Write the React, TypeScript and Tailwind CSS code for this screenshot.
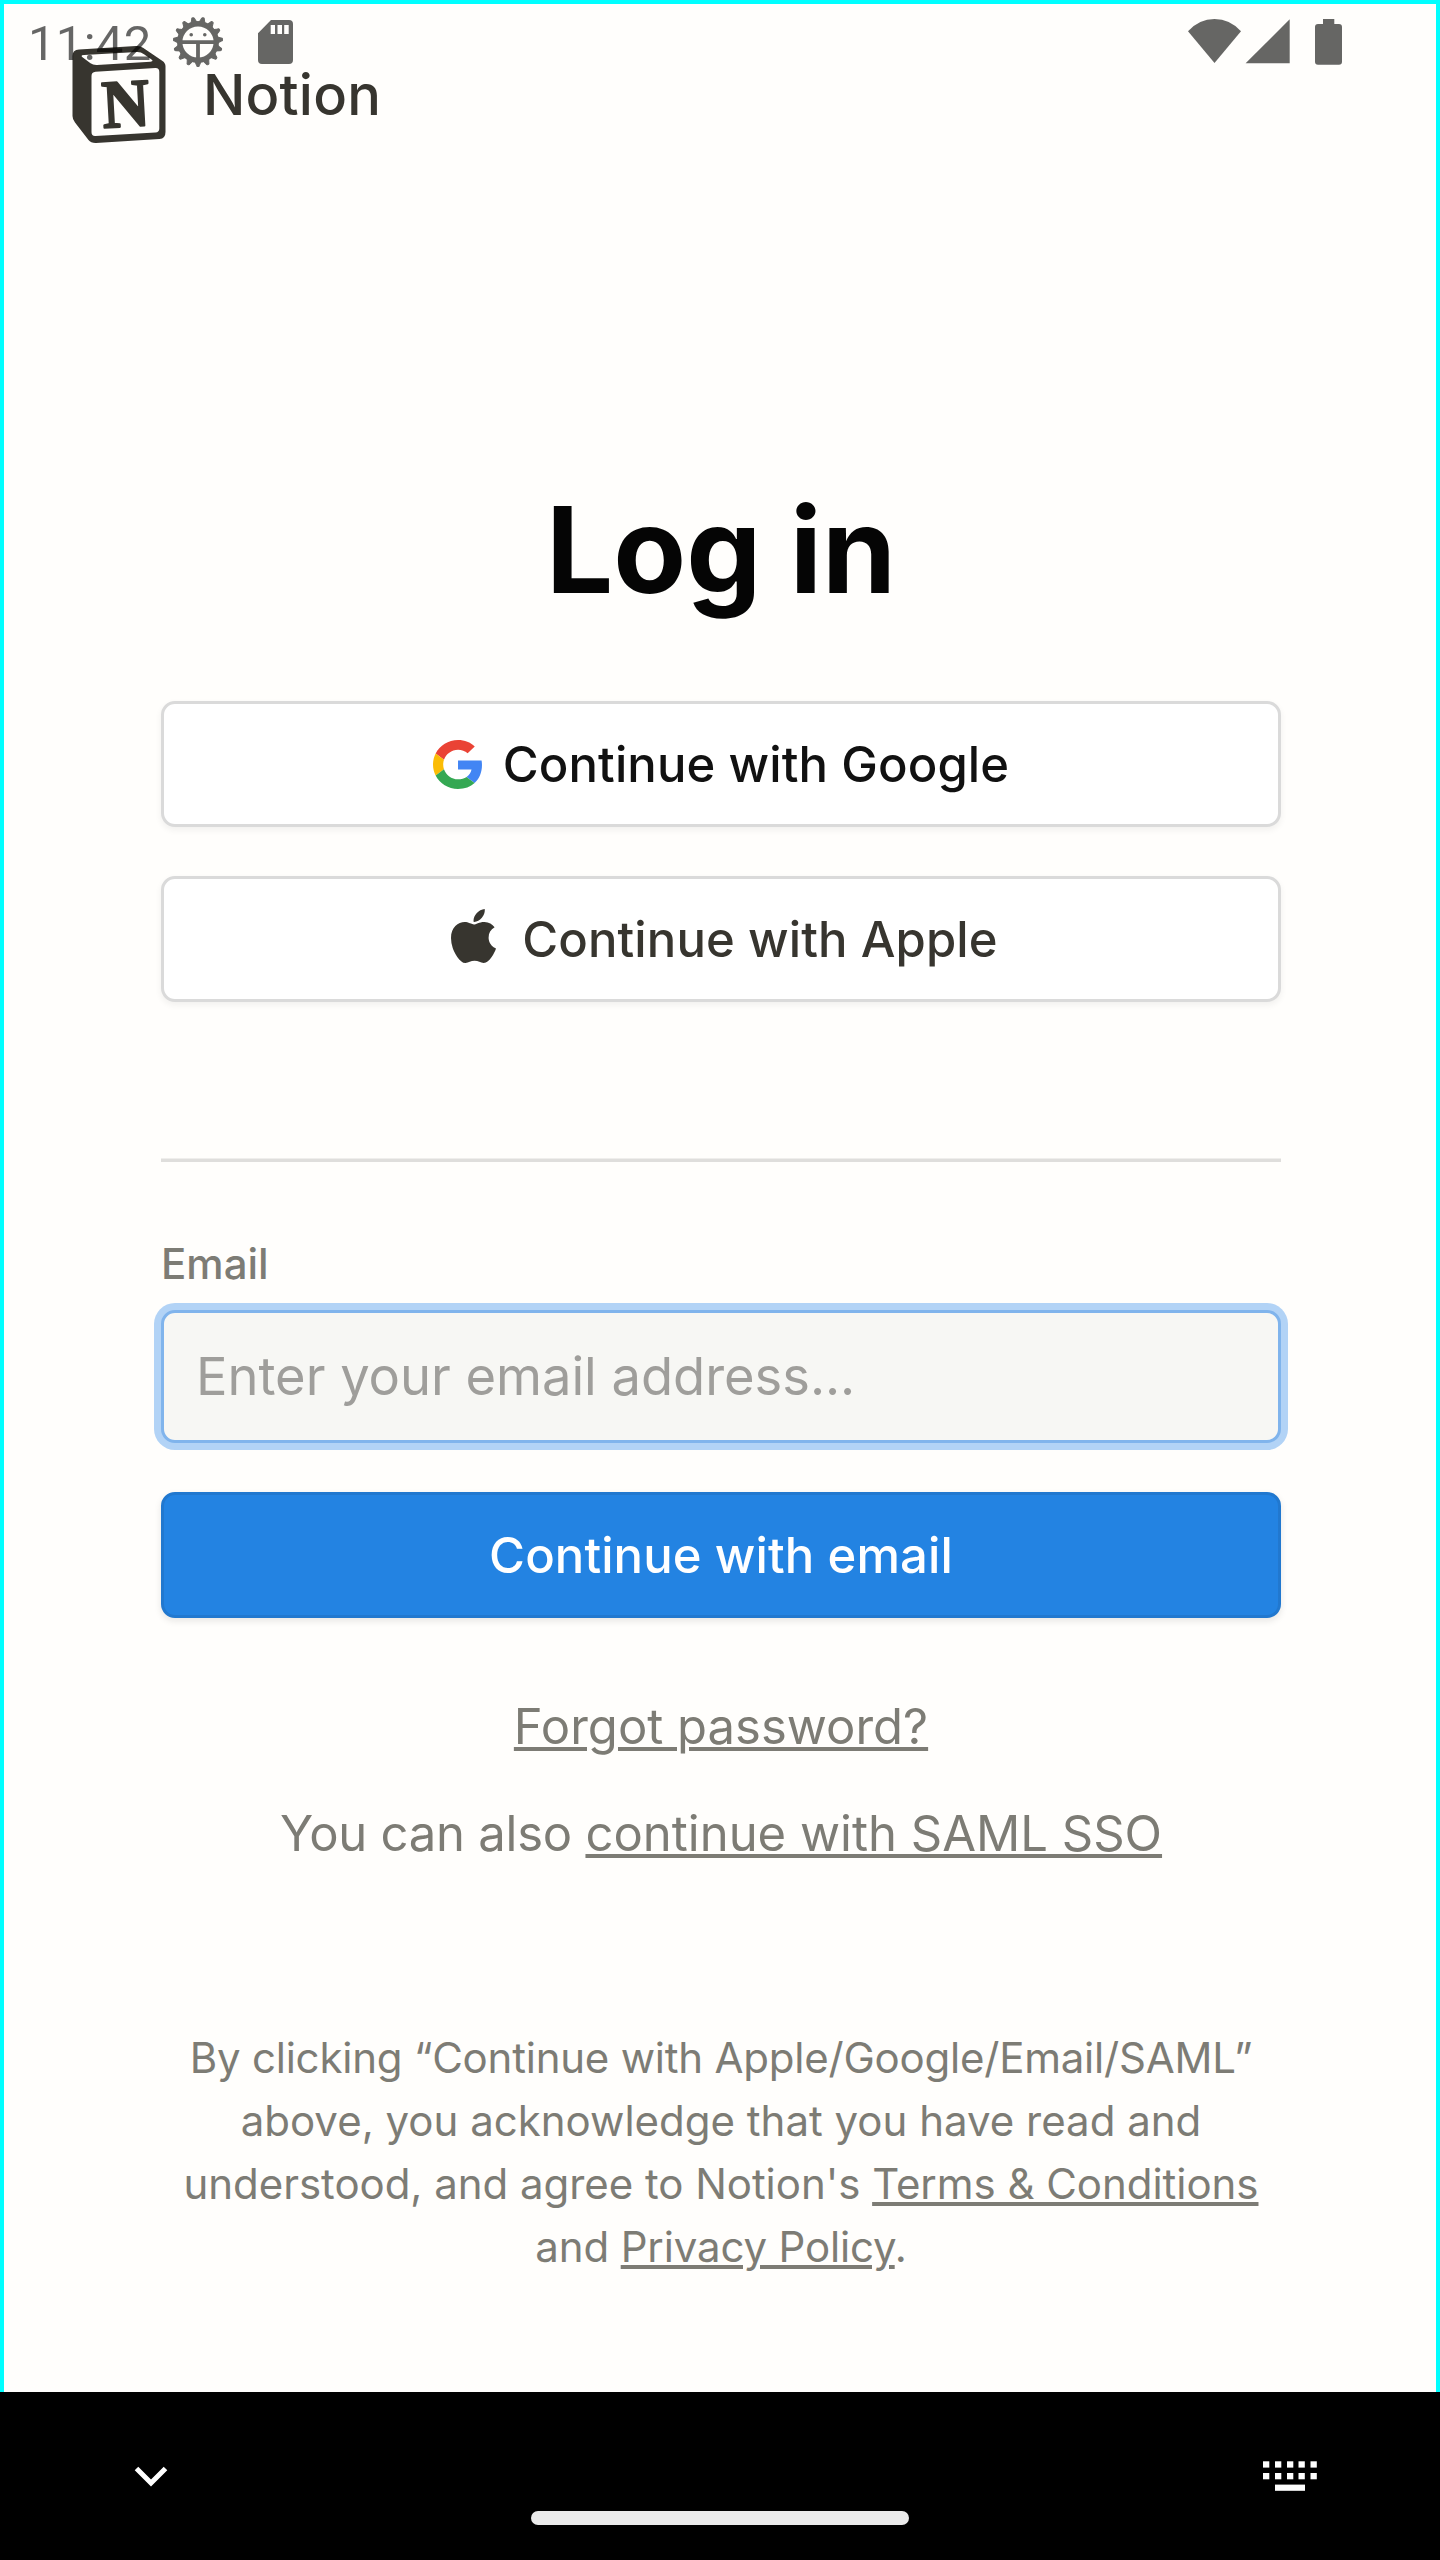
import React from "react";

function NotionMark() {
  return (
    <svg width="94" height="98" viewBox="72 46 94 98" className="block shrink-0">
      <path
        fill="#37352f"
        fillRule="evenodd"
        d="M79 49.6 L136 46 Q140 45.8 143 47.8 L162.5 61 Q165.5 63 165.5 66.5 V132 Q165.5 138.6 159.5 139 L96 143 Q91 143.2 88.5 140 L75 122.5 Q72.5 119.5 72.5 116 V56 Q72.5 50 79 49.6 Z M84 55 Q80 55.3 82.5 57.2 L90.5 63.2 Q93 65.1 97 64.9 L150.500 61.700 Q154 61.400 151.500 59.500 L144 54.300 Q141 51.900 137 52 Z M95.500 71.700 Q91.500 72 91.500 76 V132 Q91.500 136.300 95.500 136 L155.500 132.500 Q159.300 132.200 159.300 128.500 V72 Q159.300 67.900 155.300 68.100 Z"
      />
      <text
        x="102"
        y="126.5"
        transform="rotate(-3.2 125 103)"
        fontFamily="Liberation Serif"
        fontWeight="700"
        fontSize="68"
        textLength="47.5"
        lengthAdjust="spacingAndGlyphs"
        fill="#37352f"
        stroke="#37352f"
        strokeWidth="2.2"
        strokeLinejoin="round"
      >
        N
      </text>
    </svg>
  );
}

function DebugIcon() {
  const teeth = Array.from({ length: 15 }, (_, i) => 90 + i * 24);
  return (
    <svg width="50" height="50" viewBox="-25 -25 50 50" className="block">
      <circle r="18.300" fill="none" stroke="#666664" strokeWidth="5.400" />
      {teeth.map((a) => (
        <path key={a} d="M18 -3.600 L23.300 -1.500 A1.500 1.500 0 0 1 23.300 1.500 L18 3.600 Z" fill="#666664" stroke="#666664" strokeWidth="1" transform={`rotate(${a})`} />
      ))}
      <path d="M-17 0.200 H17 M0 0 V17" stroke="#666664" strokeWidth="3.800" />
      <circle cx="-6.800" cy="-7.300" r="1.800" fill="#666664" />
      <circle cx="6.800" cy="-7.300" r="1.800" fill="#666664" />
    </svg>
  );
}

function SdIcon() {
  return (
    <svg width="35" height="44" viewBox="0 0 35 44" className="block">
      <path
        fill="#666664"
        fillRule="evenodd"
        d="M13 0 H31 Q35 0 35 4 V40 Q35 44 31 44 H4 Q0 44 0 40 V13.300 Z M12.700 5 V14 H17 V5 Z M19.500 5 V14 H24 V5 Z M26.200 5 V14 H30.700 V5 Z"
      />
    </svg>
  );
}

function StatusBar() {
  return (
    <div className="absolute inset-x-0 top-0 flex h-[84px] items-center justify-between pr-[98px] pl-[28px]">
      <div className="flex items-center">
        <span className="mt-[3px] w-[144.5px] font-[Roboto] text-[49px] leading-[58px] tracking-[0.3px] text-black/60">11:42</span>
        <DebugIcon />
        <div className="ml-[35px]">
          <SdIcon />
        </div>
      </div>
      <svg width="154" height="46" viewBox="1188 19 154 46" className="block" fill="#666664">
        <path d="M1188 31.300 Q1199 19 1214.500 19 Q1230 19 1241 31.300 L1214.500 63 Z" />
        <path d="M1245.600 63.300 L1289.700 19.300 V63.300 Z" />
        <path d="M1323 19 H1334.300 V24 H1339 Q1342 24 1342 27 V61.700 Q1342 64.700 1339 64.700 H1318 Q1315 64.700 1315 61.700 V27 Q1315 24 1318 24 H1323 Z" />
      </svg>
    </div>
  );
}

function GoogleIcon() {
  return (
    <svg width="49" height="49" viewBox="0 0 47 48" preserveAspectRatio="none" className="block">
      <path fill="#EA4335" d="M24 9.5c3.54 0 6.71 1.22 9.21 3.6l6.85-6.85C35.9 2.38 30.47 0 24 0 14.62 0 6.51 5.38 2.56 13.22l7.98 6.19C12.43 13.72 17.74 9.5 24 9.5z" />
      <path fill="#4285F4" d="M46.98 24.55c0-1.57-.15-3.09-.38-4.55H24v9.02h12.94c-.58 2.96-2.26 5.48-4.78 7.18l7.73 6c4.51-4.18 7.09-10.36 7.09-17.65z" />
      <path fill="#FBBC05" d="M10.53 28.59c-.48-1.45-.76-2.99-.76-4.59s.27-3.14.76-4.59l-7.98-6.19C.92 16.46 0 20.12 0 24c0 3.88.92 7.54 2.56 10.78l7.97-6.19z" />
      <path fill="#34A853" d="M24 48c6.48 0 11.93-2.13 15.89-5.81l-7.73-6c-2.15 1.45-4.92 2.3-8.16 2.3-6.26 0-11.57-4.22-13.47-9.91l-7.98 6.19C6.51 42.62 14.62 48 24 48z" />
    </svg>
  );
}

function AppleIcon() {
  return (
    <svg width="45" height="54" viewBox="4 32 376.400 448" preserveAspectRatio="none" className="block" fill="#37352f">
      <path d="M318.7 268.7c-.2-36.7 16.4-64.4 50-84.8-18.8-26.9-47.2-41.7-84.7-44.6-35.5-2.8-74.3 20.7-88.5 20.7-15 0-49.4-19.7-76.4-19.7C63.3 141.2 4 184.8 4 273.5q0 39.3 14.4 81.2c12.8 36.7 59 126.7 107.2 125.2 25.2-.6 43-17.9 75.8-17.9 31.8 0 48.3 17.9 76.4 17.9 48.6-.7 90.4-82.5 102.6-119.3-65.2-30.7-61.7-90-61.7-91.9zm-56.6-164.2c27.3-32.4 24.8-61.9 24-72.5-24.1 1.4-52 16.4-67.9 34.9-17.5 19.8-27.8 44.3-25.6 71.9 26.1 2 49.9-11.4 69.5-34.3z" />
    </svg>
  );
}

function KeyboardBar() {
  return (
    <div className="relative h-[168px] bg-black">
      <div className="flex items-start justify-between pt-[69px] pr-[123px] pl-[134px]">
        <svg width="34" height="21" viewBox="0 0 34 21" className="mt-[5px] block">
          <path d="M2.500 2.500 L17 17 L31.500 2.500" fill="none" stroke="#fff" strokeWidth="5" />
        </svg>
        <svg width="54" height="30" viewBox="0 0 54 30" className="block" fill="#fff">
          {[0, 12, 24, 35.500, 47.500].map((x) => (
            <React.Fragment key={x}>
              <rect x={x} y="0.300" width="6.300" height="6.300" />
              <rect x={x} y="12" width="6.300" height="6.300" />
            </React.Fragment>
          ))}
          <rect x="12" y="23.600" width="30" height="6.200" />
        </svg>
      </div>
      <div className="absolute top-[119px] left-[531px] h-[14px] w-[378px] rounded-full bg-[#ebebeb]" />
    </div>
  );
}

export default function App() {
  return (
    <div className="flex h-[2560px] w-[1440px] flex-col font-[Inter,sans-serif]">
      <div className="relative flex h-[2392px] flex-col border-x-4 border-t-4 border-[#00ffff] bg-[#fffefc]">
        <header className="flex h-[140px] items-start pt-[42px] pl-[68px]">
          <NotionMark />
          <span className="mt-[14px] ml-[37px] text-[56px] leading-[70px] font-medium tracking-[0.2px] text-[#37352f]">Notion</span>
        </header>
        <div className="absolute -inset-x-1 -top-1">
          <StatusBar />
        </div>
        <main className="ml-[157px] flex w-[1120px] flex-col pt-[336px]">
          <h1 className="text-center text-[119px] leading-[140px] font-bold text-[#050505]">Log in</h1>
          <button className="mt-[81px] flex h-[126px] items-center justify-center rounded-[14px] border-[3px] border-[#dadada] bg-white text-[49px] font-medium tracking-[0.1px] text-[#111] shadow-[0_3px_7px_rgba(15,15,15,0.06)]">
            <GoogleIcon />
            <span className="mt-[2px] ml-[21px]">Continue with Google</span>
          </button>
          <button className="mt-[49px] flex h-[126px] items-center justify-center rounded-[14px] border-[3px] border-[#dadada] bg-white pl-[7px] text-[49px] font-medium tracking-[0.1px] text-[#37352f] shadow-[0_3px_7px_rgba(15,15,15,0.06)]">
            <span className="-mt-[6px]">
              <AppleIcon />
            </span>
            <span className="mt-[2px] ml-[26px]">Continue with Apple</span>
          </button>
          <div className="mt-[156px] h-[4px] border-t border-[#efeeec] bg-[#dfdedc]" />
          <label className="mt-[77px] text-[42px] leading-[50px] font-medium text-[#7d7c75]">Email</label>
          <div className="mt-[21px] flex h-[133px] items-center rounded-[14px] border-[3px] border-[#80b4ec] bg-[#f7f7f4] px-[32px] text-[52.5px] tracking-[-0.04px] text-[#9f9e9b] shadow-[0_0_0_7px_#b2d3f6]">
            Enter your email address...
          </div>
          <button className="mt-[49px] flex h-[126px] items-center justify-center rounded-[14px] border-[3px] border-[#2178cf] bg-[#2383e2] pt-[2px] text-[49px] font-medium tracking-[0.1px] text-white shadow-[0_3px_7px_rgba(15,15,15,0.1)]">
            Continue with email
          </button>
          <p className="mt-[79px] text-center text-[49px] leading-[60px] text-[#7d7c75]">
            <a className="underline decoration-[4px] underline-offset-[3px]">Forgot password?</a>
          </p>
          <p className="mt-[47px] text-center text-[49px] leading-[60px] text-[#7d7c75]">
            <span className="tracking-[-0.25px]">You can also </span>
            <a className="underline decoration-[4px] underline-offset-[3px]">continue with SAML SSO</a>
          </p>
          <p className="mt-[162px] text-center text-[42px] leading-[63px] text-[#7d7c75]">
            <span className="tracking-[-0.22px]">By clicking “Continue with Apple/Google/Email/SAML”</span>
            <br />
            above, you acknowledge that you have read and
            <br />
            <span className="tracking-[-0.04px]">
              understood, and agree to Notion's{" "}
              <a className="underline decoration-[4px] underline-offset-[3px]">Terms &amp; Conditions</a>
            </span>
            <br />
            <span className="tracking-[-0.15px]">
              and <a className="underline decoration-[4px] underline-offset-[3px]">Privacy Policy</a>.
            </span>
          </p>
        </main>
      </div>
      <KeyboardBar />
    </div>
  );
}
